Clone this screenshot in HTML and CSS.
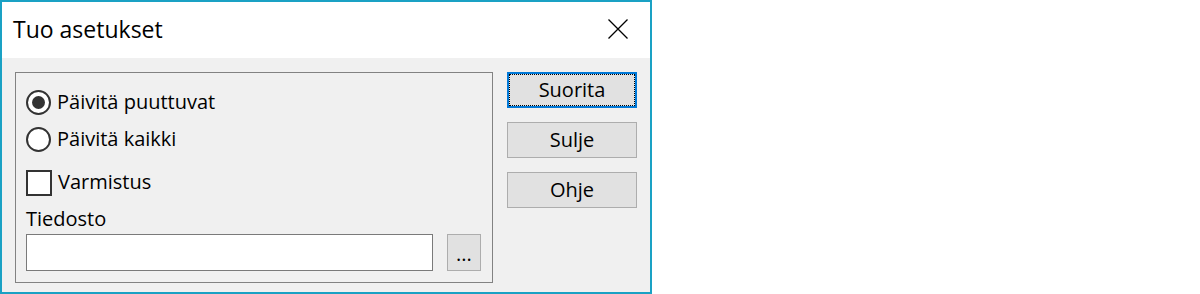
FILE: index.html
```html
<!DOCTYPE html>
<html lang="fi">
<head>
<meta charset="utf-8">
<title>Tuo asetukset</title>
<link rel="stylesheet" href="styles.css">
</head>
<body>
<div class="window">
  <div class="titlebar">
    <span class="title">Tuo asetukset</span>
    <span class="close" aria-label="Sulje">
      <svg width="20" height="20" viewBox="0 0 20 20"><path d="M0.5 0.5 L19.5 19.5 M19.5 0.5 L0.5 19.5" stroke="#000" stroke-width="1.3" fill="none"/></svg>
    </span>
  </div>
  <div class="body">
    <div class="group">
      <label class="opt radio-row first">
        <span class="radio checked"><span class="dot"></span></span>
        <span class="lbl">Päivitä puuttuvat</span>
      </label>
      <label class="opt radio-row second">
        <span class="radio"></span>
        <span class="lbl">Päivitä kaikki</span>
      </label>
      <label class="opt check-row">
        <span class="check"></span>
        <span class="lbl">Varmistus</span>
      </label>
      <div class="file-label">Tiedosto</div>
      <div class="file-row">
        <div class="input"></div>
        <div class="browse">...</div>
      </div>
    </div>
    <div class="buttons">
      <div class="btn focused">Suorita</div>
      <div class="btn">Sulje</div>
      <div class="btn">Ohje</div>
    </div>
  </div>
</div>
</body>
</html>
```

FILE: styles.css
```css
* { box-sizing: border-box; }
html, body { margin: 0; padding: 0; background: #ffffff; }
body {
  font-family: "Open Sans", "Noto Sans", "Liberation Sans", sans-serif;
  font-size: 20px;
  color: #000;
}
.window {
  width: 652px;
  height: 294px;
  border: 2px solid #1aa1c4;
  display: flex;
  flex-direction: column;
  background: #f0f0f0;
}
.titlebar {
  height: 56px;
  background: #ffffff;
  display: flex;
  align-items: center;
  justify-content: space-between;
  padding: 0 22px 0 11px;
}
.title { font-size: 23px; line-height: 28px; margin-top: -2px; }
.close { display: flex; width: 20px; height: 20px; margin-top: -2px; }
.body {
  flex: 1;
  display: flex;
  padding: 14px 13px 9px 13px;
  gap: 14px;
  align-items: flex-start;
}
.group {
  width: 478px;
  height: 211px;
  border: 1px solid #828282;
  padding: 17px 10px 0 10px;
  display: flex;
  flex-direction: column;
}
.opt {
  display: flex;
  align-items: center;
  height: 25px;
  gap: 6px;
}
.radio-row.second { margin-top: 12px; }
.check-row { margin-top: 18px; height: 26px; }
.lbl { line-height: 26px; margin-top: -2px; }
.radio {
  width: 25px;
  height: 25px;
  border: 2px solid #333333;
  border-radius: 50%;
  background: #ffffff;
  display: flex;
  align-items: center;
  justify-content: center;
  flex: none;
}
.dot {
  width: 13px;
  height: 13px;
  border-radius: 50%;
  background: #333333;
}
.check {
  width: 26px;
  height: 26px;
  border: 2px solid #333333;
  background: #ffffff;
  flex: none;
}
.file-label {
  margin-top: 11px;
  line-height: 26px;
  height: 24px;
  display: flex;
  align-items: center;
}
.file-row {
  margin-top: 3px;
  display: flex;
  gap: 14px;
}
.input {
  width: 407px;
  height: 37px;
  border: 1px solid #7a7a7a;
  background: #ffffff;
}
.browse {
  width: 34px;
  height: 37px;
  border: 1px solid #adadad;
  background: #e1e1e1;
  display: flex;
  align-items: center;
  justify-content: center;
  line-height: 20px;
  padding-top: 3px;
}
.buttons {
  display: flex;
  flex-direction: column;
  gap: 14px;
}
.btn {
  width: 130px;
  height: 36px;
  border: 1px solid #adadad;
  background: #e1e1e1;
  display: flex;
  align-items: center;
  justify-content: center;
  line-height: 26px;
  padding-bottom: 1px;
}
.btn.focused {
  border: 2px solid #0078d7;
  outline: 1px dotted #000000;
  outline-offset: -3px;
}
```
